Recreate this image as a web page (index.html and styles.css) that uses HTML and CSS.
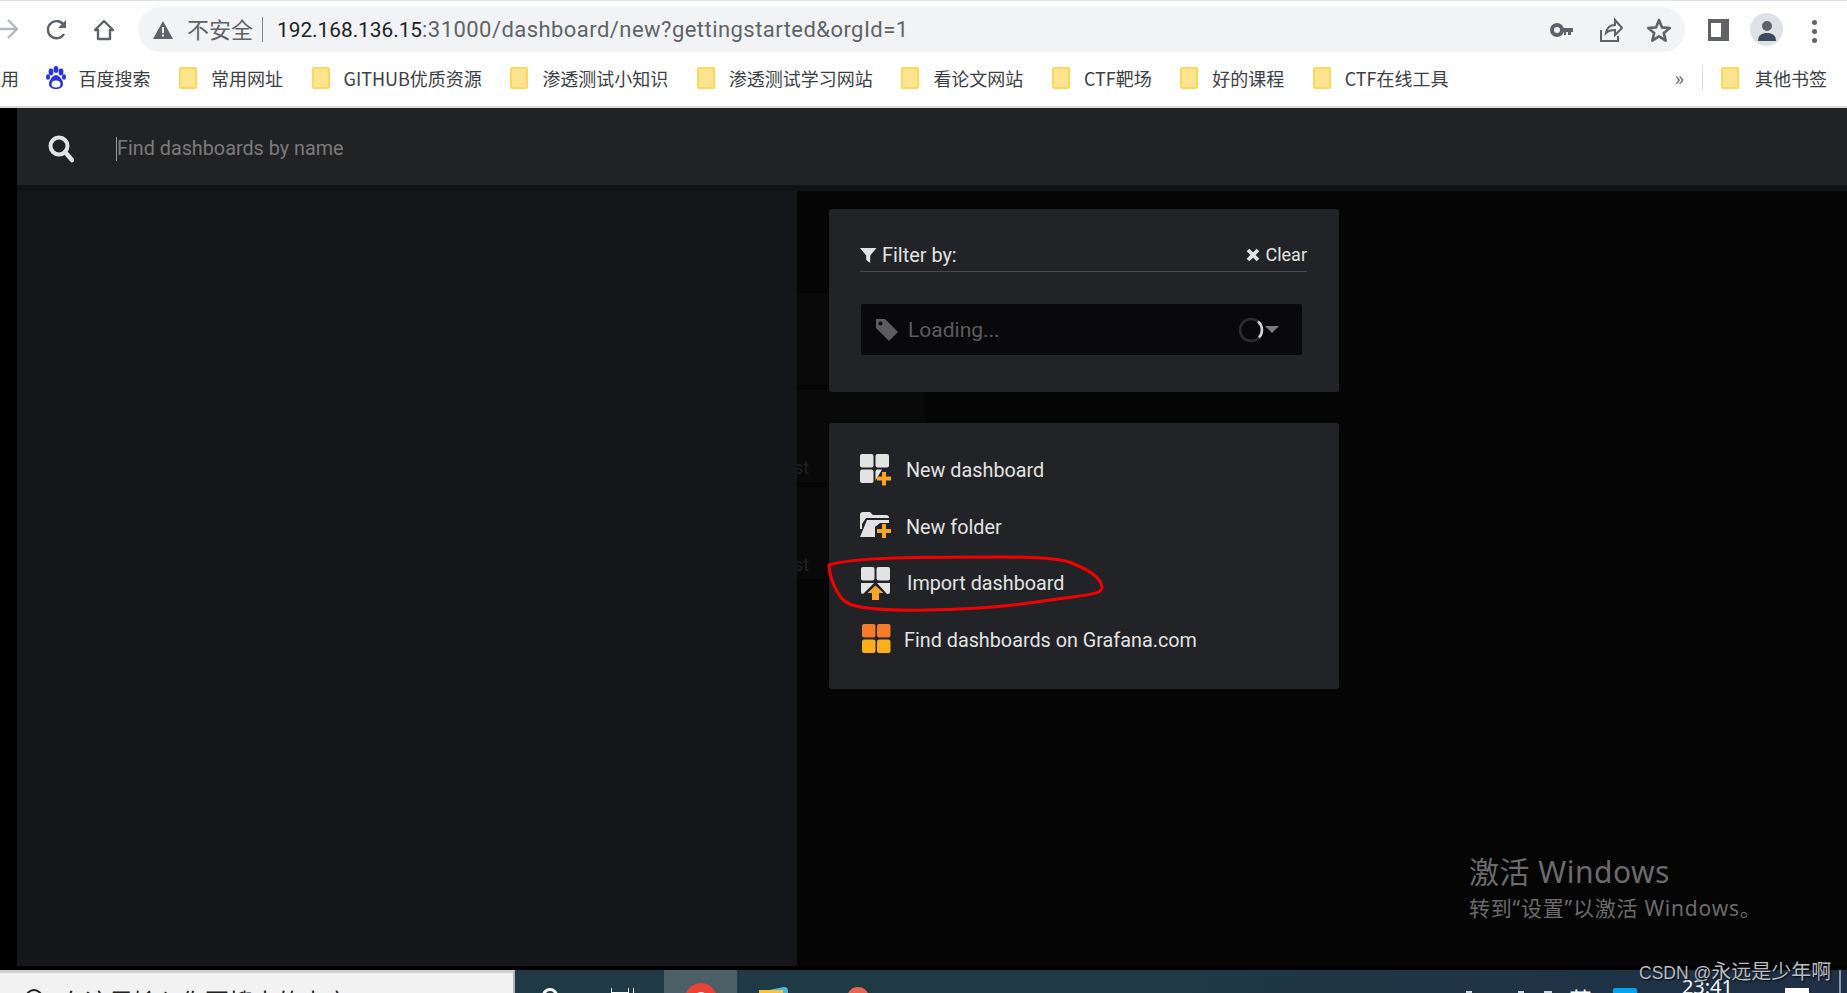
FILE: index.html
```html
<!DOCTYPE html>
<html>
<head>
  <meta charset="UTF-8">
  <title>Grafana</title>
  <link rel="stylesheet" href="styles.css">
</head>
<body>
  <div class="toolbar">
    <svg class="back" width="18" height="22" viewBox="0 0 18 22"><path d="M-4 11H16M8 2l9 9-9 9" fill="none" stroke="#b4b7bb" stroke-width="2.4"/></svg>
    <svg class="reload" width="22" height="24" viewBox="0 0 22 24"><path d="M18 16a8.6 8.6 0 1 1 0-8.6" fill="none" stroke="#5f6368" stroke-width="2.4"/><path d="M20 2v8h-8z" fill="#5f6368"/></svg>
    <svg class="home" width="22" height="24" viewBox="0 0 22 24"><path d="M11 3L2 12h3v9h12v-9h3z" fill="none" stroke="#5f6368" stroke-width="2.4" stroke-linejoin="round"/></svg>
    <div class="omnibox">
      <svg class="warn" width="20" height="18" viewBox="0 0 20 18"><path d="M10 0l10 18H0z" fill="#5f6368"/><path d="M9 6h2v6H9zM9 13.500h2v2H9z" fill="#f1f3f4"/></svg>
      <span class="insecure">不安全</span>
      <span class="omni-sep"></span>
      <span class="url"><b>192.168.136.15</b>:31000/dashboard/new?gettingstarted&amp;orgId=1</span>
      <svg class="omni-icon key" width="24" height="14" viewBox="0 0 24 14"><circle cx="7" cy="7" r="5" fill="none" stroke="#5f6368" stroke-width="4"/><path d="M11 5h12v4h-2v3h-3V9h-2v3h-2V9h-3z" fill="#5f6368"/></svg>
      <svg class="omni-icon share" width="24" height="26" viewBox="0 0 24 26"><path d="M2 13v11h17v-5M7 16c1-6 5-8 9-8V3l7 8-7 7v-5c-4 0-7 1-9 3z" fill="none" stroke="#5f6368" stroke-width="2"/></svg>
      <svg class="omni-icon star" width="24" height="24" viewBox="0 0 24 24"><path d="M12 2l3 7.400 7.800.6-6 5 1.900 7.600L12 18.400 5.300 22.600 7.200 15l-6-5 7.800-.6z" fill="none" stroke="#5f6368" stroke-width="2.600" stroke-linejoin="round"/></svg>
    </div>
    <div class="side-panel"></div>
    <div class="avatar">
      <svg width="20" height="22" viewBox="0 0 20 22"><circle cx="10" cy="6" r="5" fill="#5f6368"/><path d="M1 21c0-6 4-8 9-8s9 2 9 8z" fill="#3c4a5e"/></svg>
    </div>
    <div class="dots"><i></i><i></i><i></i></div>
  </div>

  <div class="bookmarks">
    <span class="apps-cut"><span>应用</span></span>
    <a class="mark mark-baidu">
      <svg class="paw" width="20" height="24" viewBox="0 0 20 24"><ellipse cx="5" cy="6" rx="2.400" ry="3.400" fill="#2932e1"/><ellipse cx="15" cy="6" rx="2.400" ry="3.400" fill="#2932e1"/><ellipse cx="10" cy="3.500" rx="2.400" ry="3.400" fill="#2932e1"/><ellipse cx="2" cy="11" rx="2" ry="2.800" fill="#2932e1"/><ellipse cx="18" cy="11" rx="2" ry="2.800" fill="#2932e1"/><path d="M10 9c-3 0-6 4-7 8-.5 4 3 6 7 6s7.500-2 7-6c-1-4-4-8-7-8z" fill="#2932e1"/><ellipse cx="10" cy="18" rx="4.500" ry="3.600" fill="#fff"/></svg>
      百度搜索
    </a>
    <a class="mark"><i class="folder"></i>常用网址</a>
    <a class="mark"><i class="folder"></i>GITHUB优质资源</a>
    <a class="mark"><i class="folder"></i>渗透测试小知识</a>
    <a class="mark"><i class="folder"></i>渗透测试学习网站</a>
    <a class="mark"><i class="folder"></i>看论文网站</a>
    <a class="mark"><i class="folder"></i>CTF靶场</a>
    <a class="mark"><i class="folder"></i>好的课程</a>
    <a class="mark"><i class="folder"></i>CTF在线工具</a>
    <span class="more">»</span>
    <span class="mark-sep"></span>
    <a class="mark mark-other"><i class="folder"></i>其他书签</a>
  </div>

  <div class="viewport">
    <div class="searchbar">
      <svg width="26" height="28" viewBox="0 0 26 28"><circle cx="11" cy="11" r="8.500" fill="none" stroke="#e3e3e3" stroke-width="4"/><path d="M17 17l7 8" stroke="#e3e3e3" stroke-width="4.500" stroke-linecap="round"/></svg>
      <span class="caret"></span>
      <span class="placeholder">Find dashboards by name</span>
    </div>
    <div class="search-edge"></div>
    <div class="results">
      <div class="left-pane"></div>
      <div class="right-pane">
        <div class="ghost-list">
          <div class="ghost-row"></div>
          <div class="ghost-row"><span>st</span></div>
          <div class="ghost-row"><span>st</span></div>
        </div>
        <div class="panel filter-panel">
          <div class="filter-head">
            <svg width="17" height="17" viewBox="0 0 17 17"><path d="M0 1h16.500l-6.300 7.500V16l-4-3V8.500z" fill="#e3e3e3"/></svg>
            <span class="filter-title">Filter by:</span>
            <svg class="clear-x" width="14" height="14" viewBox="0 0 14 14"><path d="M2 2l10 10M12 2L2 12" stroke="#e3e3e3" stroke-width="3.800"/></svg>
            <span class="clear">Clear</span>
          </div>
          <div class="tag-select">
            <svg width="24" height="24" viewBox="0 0 24 24"><path d="M1 1h9l13 13-9 9L1 10z" fill="#5c5c5e"/><circle cx="5.500" cy="5.500" r="2" fill="#09090b"/></svg>
            <span class="loading">Loading...</span>
            <svg class="spinner" width="26" height="26" viewBox="0 0 26 26"><circle cx="13" cy="13" r="11" fill="none" stroke="#2c2d30" stroke-width="2.500"/><path d="M20 4.500a11 11 0 0 1 1 16" fill="none" stroke="#d5d5d5" stroke-width="2.500"/></svg>
            <i class="select-caret"></i>
          </div>
        </div>

        <div class="panel action-panel">
          <a class="action">
            <svg width="33" height="33" viewBox="0 0 33 33">
              <rect x="0" y="0" width="13.500" height="13.500" rx="2" fill="#e3e3e3"/><rect x="15.500" y="0" width="13.500" height="13.500" rx="2" fill="#e3e3e3"/><rect x="0" y="15.500" width="13.500" height="13.500" rx="2" fill="#e3e3e3"/><path d="M15.500 17a2 2 0 0 1 2-1.500H22l-6.500 11z" fill="#e3e3e3"/>
              <path d="M22 18h4v4.500h5v4h-5v5h-4v-5h-5v-4h5z" fill="#f5a623"/>
            </svg>
            <span>New dashboard</span>
          </a>
          <a class="action">
            <svg width="33" height="33" viewBox="0 0 33 33">
              <path d="M0 4a3 3 0 0 1 3-3h7l3 3h13a3 3 0 0 1 3 3H6L2 13v5H0z" fill="#e3e3e3"/><path d="M7 9h22v3H20l-5 4v10H0z" fill="#e3e3e3"/>
              <path d="M22 13h4v5h5v4h-5v5h-4v-5h-5v-4h5z" fill="#f5a623"/>
            </svg>
            <span>New folder</span>
          </a>
          <a class="action action-import">
            <svg width="33" height="33" viewBox="0 0 33 33">
              <rect x="1" y="0" width="13.500" height="13.500" rx="2" fill="#e3e3e3"/><rect x="16.500" y="0" width="13.500" height="13.500" rx="2" fill="#e3e3e3"/>
              <path d="M1 16h9l4 0-11 11H3a2 2 0 0 1-2-2zM17 16h13v9a2 2 0 0 1-2 2h-1z" fill="#e3e3e3"/>
              <path d="M15.500 16L26 26.500h-6V33h-9v-6.500H5z" fill="#212327"/>
              <path d="M15.500 18.500L23.500 26H19v7h-7v-7H7.500z" fill="#f9a825"/>
            </svg>
            <span>Import dashboard</span>
          </a>
          <a class="action action-find">
            <svg width="33" height="33" viewBox="0 0 33 33">
              <rect x="2" y="0" width="13.500" height="13.500" rx="2" fill="#f47b27"/><rect x="17" y="0" width="13.500" height="13.500" rx="2" fill="#f47b27"/>
              <rect x="2" y="15.500" width="13.500" height="13.500" rx="2" fill="#fbb017"/><rect x="17" y="15.500" width="13.500" height="13.500" rx="2" fill="#fbb017"/>
            </svg>
            <span>Find dashboards on Grafana.com</span>
          </a>
        </div>
      </div>
    </div>
  </div>

  <div class="taskbar">
    <div class="task-search">
      <svg width="20" height="20" viewBox="0 0 20 20"><circle cx="10" cy="10" r="8" fill="none" stroke="#222" stroke-width="2"/></svg>
      <span>在这里输入你要搜索的内容</span>
    </div>
    <div class="task-cortana"></div>
    <div class="task-view"></div>
    <div class="task-view-line"></div>
    <div class="task-app active">
      <svg width="32" height="32" viewBox="0 0 32 32"><circle cx="16" cy="16" r="16" fill="#ea4335"/><path d="M16 16L32 16A16 16 0 0 1 16 32z" fill="#fbbc05"/><circle cx="16" cy="16" r="7" fill="#f3f3f3"/></svg>
    </div>
    <div class="task-app">
      <svg width="32" height="32" viewBox="0 0 32 32"><path d="M6 8l20-4q4 0 4 4v10H6z" fill="#4fb6dc"/><path d="M1 7h24v20H1z" fill="#f6c33c"/></svg>
    </div>
    <div class="task-app task-app-last">
      <svg width="22" height="22" viewBox="0 0 22 22"><circle cx="11" cy="11" r="11" fill="#e8654f"/></svg>
    </div>
    <div class="tray">
      <i class="tray-bit bit-a"></i>
      <i class="tray-bit bit-b"></i>
      <i class="tray-bit bit-c"></i>
      <span class="tray-mark">英</span>
      <i class="tray-blue"></i>
      <span class="clock">23:41</span>
      <i class="tray-note"></i>
      <i class="tray-line"></i>
    </div>
  </div>

  <!-- overlays on top of the screenshot -->
  <svg class="ring" width="278" height="58" viewBox="0 0 278 58"><path d="M2 10C25 3 70 2 175 2C205 2 228 3 242 7C258 13 274 22 275 32C275 38 268 39 245 42C215 46 175 54 100 55C75 55.500 45 55 29 51C20 49 14 44 11 38C6 30 2 18 2 10z" fill="none" stroke="#f40000" stroke-width="3"/></svg>
  <div class="activate">
    <div class="activate-big">激活 Windows</div>
    <div class="activate-small">转到“设置”以激活 Windows。</div>
  </div>
  <div class="watermark"><span>CSDN @</span>永远是少年啊</div>
</body>
</html>
```

FILE: styles.css
```css
html, body {
  margin: 0;
  height: 100%;
}

body {
  width: 1847px;
  height: 993px;
  overflow: hidden;
  position: relative;
  display: flex;
  flex-direction: column;
  background: #050506;
  font-family: "Noto Sans CJK SC", "Noto Sans", sans-serif;
}

/* browser toolbar */
.toolbar {
  height: 60px;
  box-sizing: border-box;
  padding-top: 7px;
  display: flex;
  align-items: flex-start;
  background: #fff;
  border-top: 1px solid #dee1e6;
}

.toolbar > svg {
  margin-top: 10px;
}

.reload {
  margin-left: 28px;
}

.home {
  margin-left: 25px;
}

.omnibox {
  width: 1547px;
  height: 45px;
  margin-left: 23px;
  margin-top: -1px;
  padding-left: 15px;
  box-sizing: border-box;
  display: flex;
  align-items: center;
  background: #f1f3f4;
  border-radius: 23px;
}

.insecure {
  margin-left: 14px;
  margin-top: -4px;
  font-size: 22px;
  color: #5f6368;
}

.omni-sep {
  width: 1px;
  height: 25px;
  margin-left: 9px;
  background: #80868b;
}

.url {
  margin-left: 14px;
  font-family: "Roboto", sans-serif;
  font-size: 22px;
  letter-spacing: 0.45px;
  color: #5f6368;
  white-space: nowrap;
}

.url b {
  font-size: 20.800px;
  font-weight: 400;
  letter-spacing: 0;
  color: #202124;
}

.omni-icon {
  flex-shrink: 0;
}

.key {
  margin-left: auto;
}

.share {
  margin-left: 25px;
}

.star {
  margin-left: 24px;
  margin-right: 14px;
}

.side-panel {
  margin-left: 23px;
  margin-top: 11px;
  border: 4px solid #5f6368;
  border-right-width: 8px;
  border-left-width: 3px;
  background: #fff;
  width: 10px;
  height: 14px;
}

.avatar {
  width: 33px;
  height: 33px;
  margin-left: 21px;
  margin-top: 5px;
  display: flex;
  align-items: flex-end;
  justify-content: center;
  border-radius: 50%;
  background: #dee1e6;
}

.avatar svg {
  margin-bottom: 4px;
}

.dots {
  margin-left: 29px;
  margin-top: 12px;
  display: flex;
  flex-direction: column;
  gap: 4px;
}

.dots i {
  width: 5px;
  height: 5px;
  border-radius: 50%;
  background: #5f6368;
}

/* bookmarks bar */
.bookmarks {
  height: 48px;
  box-sizing: border-box;
  padding: 0 20px 11px 0;
  display: flex;
  align-items: center;
  gap: 28.500px;
  background: #fff;
  border-bottom: 2px solid #dcdcdc;
  font-size: 18px;
  color: #3c4043;
  white-space: nowrap;
}

.apps-cut {
  width: 19px;
  overflow: hidden;
  direction: rtl;
}

.mark {
  display: flex;
  align-items: center;
  gap: 14px;
}

.mark-baidu {
  gap: 13px;
  margin-left: -2px;
}

.mark-other {
  gap: 16px;
}

.paw {
  flex-shrink: 0;
}

.folder {
  width: 18px;
  height: 22px;
  box-sizing: border-box;
  background: #fde58f;
  border: 2px solid #fbd75b;
  border-radius: 2px;
}

.more {
  margin-left: auto;
  font-size: 20px;
  color: #5f6368;
}

.mark-sep {
  width: 1px;
  height: 25px;
  margin-left: -11px;
  margin-right: -10px;
  background: #dadce0;
}

/* grafana page */
.viewport {
  flex: 1;
  min-height: 0;
  padding-left: 17px;
  display: flex;
  flex-direction: column;
  background: #000;
}

.searchbar {
  height: 77px;
  flex-shrink: 0;
  box-sizing: border-box;
  padding: 4px 0 0 31px;
  display: flex;
  align-items: center;
  background: #212224;
}

.caret {
  width: 1px;
  height: 24px;
  margin-left: 42px;
  background: #9a9a9a;
}

.placeholder {
  font-family: "Roboto", sans-serif;
  font-size: 19.800px;
  color: #7b7b7c;
}

.search-edge {
  height: 6px;
  flex-shrink: 0;
  background: #111214;
}

.results {
  flex: 1;
  min-height: 0;
  display: flex;
  padding-bottom: 4px;
}

.left-pane {
  width: 780px;
  background: #141619;
}

.right-pane {
  flex: 1;
  position: relative;
  padding: 18px 0 0 32px;
  background: #050506;
}

/* list behind the panels, barely visible through the dimmed page */
.ghost-list {
  position: absolute;
  left: 0;
  top: 102px;
  width: 128px;
  display: flex;
  flex-direction: column;
  gap: 5px;
}

.ghost-row {
  height: 92px;
  box-sizing: border-box;
  padding-bottom: 4px;
  overflow: hidden;
  display: flex;
  align-items: flex-end;
  background: #09090a;
  font-family: "Roboto", sans-serif;
  font-size: 18px;
  color: #202022;
}

.ghost-row span {
  margin-left: -3px;
}

.panel {
  width: 510px;
  box-sizing: border-box;
  position: relative;
  background: #212327;
  border-radius: 3px;
}

.filter-panel {
  height: 183px;
  padding: 30px 32px 0 31px;
}

.filter-head {
  height: 32px;
  display: flex;
  align-items: center;
  border-bottom: 1px solid #47484b;
  font-family: "Roboto", sans-serif;
  color: #e3e3e3;
}

.filter-title {
  margin-left: 5px;
  font-size: 19.900px;
}

.clear-x {
  margin-left: auto;
}

.clear {
  margin-left: 5px;
  margin-bottom: 2px;
  font-size: 18px;
}

.tag-select {
  width: 441px;
  height: 51px;
  margin-top: 32px;
  margin-left: 1px;
  padding-left: 14px;
  box-sizing: border-box;
  display: flex;
  align-items: center;
  background: #09090b;
  border-radius: 2px;
}

.loading {
  margin-left: 9px;
  font-family: "Roboto", sans-serif;
  font-size: 21px;
  color: #5c5c5e;
}

.spinner {
  margin-left: auto;
}

.select-caret {
  width: 0;
  height: 0;
  margin: 0 23px 0 1px;
  border-left: 7px solid transparent;
  border-right: 7px solid transparent;
  border-top: 7px solid #7b7b7c;
}

.action-panel {
  height: 266px;
  margin-top: 31px;
  padding: 19px 0 0 31px;
}

.action {
  height: 56.700px;
  display: flex;
  align-items: center;
  gap: 13px;
  font-family: "Roboto", sans-serif;
  font-size: 19.800px;
  color: #e3e3e3;
}

.action-import span {
  margin-left: 1px;
}

.action-find {
  gap: 11px;
}

/* windows taskbar, only its top edge is on screen */
.taskbar {
  height: 23px;
  flex-shrink: 0;
  display: flex;
  overflow: hidden;
  background: linear-gradient(90deg, #203a44, #1f3a45 60%, #1f2f46);
}

.task-search {
  width: 515px;
  flex-shrink: 0;
  box-sizing: border-box;
  padding: 15px 0 0 24px;
  display: flex;
  gap: 17px;
  background: #f2f2f2;
  border-top: 3px solid #cfcfcf;
  border-right: 2px solid #b5b5b5;
  font-size: 24px;
  line-height: 26px;
  color: #222;
  white-space: nowrap;
}

.task-search svg {
  flex-shrink: 0;
}

.task-cortana {
  width: 16px;
  height: 16px;
  flex-shrink: 0;
  margin: 18px 0 0 27px;
  box-sizing: border-box;
  border: 3px solid #fff;
  border-radius: 50%;
}

.task-view {
  width: 16px;
  height: 4px;
  flex-shrink: 0;
  margin: 18px 0 0 53px;
  box-sizing: content-box;
  border: 1px solid #fff;
  border-top: none;
}

.task-view-line {
  width: 1px;
  height: 5px;
  flex-shrink: 0;
  margin: 18px 0 0 4px;
  background: #fff;
}

.task-app {
  width: 73px;
  height: 23px;
  flex-shrink: 0;
  display: flex;
  justify-content: center;
}

.task-app svg {
  flex-shrink: 0;
  margin-top: 13px;
}

.task-app.active {
  margin-left: 30px;
  background: #4d5f66;
}

.task-app-last {
  margin-left: 11px;
}

.task-app-last svg {
  margin-top: 17px;
}

.tray {
  flex: 1;
  display: flex;
  align-items: flex-start;
  justify-content: flex-end;
  color: #fff;
}

.tray-bit {
  height: 2px;
  margin-top: 21px;
  background: #d5dbe0;
}

.bit-a {
  width: 6px;
  margin-right: 46px;
}

.bit-b {
  width: 6px;
  margin-right: 20px;
}

.bit-c {
  width: 8px;
  margin-right: 17px;
}

.tray-mark {
  margin-right: 21px;
  font-size: 23px;
  line-height: 30px;
  padding-top: 14px;
}

.tray-blue {
  width: 24px;
  height: 10px;
  margin: 18px 45px 0 0;
  background: #00a4ef;
  border-radius: 2px;
}

.clock {
  font-family: "Noto Sans", sans-serif;
  font-size: 20px;
  line-height: 24px;
  margin-top: 5px;
}

.tray-note {
  width: 24px;
  height: 10px;
  margin: 18px 30px 0 52px;
  background: #fff;
}

.tray-line {
  width: 2px;
  height: 23px;
  margin-right: 6px;
  background: #8d97a3;
}

/* overlays */
.ring {
  position: absolute;
  left: 827px;
  top: 555px;
}

.activate {
  position: absolute;
  left: 1469px;
  top: 851px;
  font-family: "Noto Sans", "Noto Sans CJK SC", sans-serif;
  color: #6b6b6b;
  white-space: nowrap;
}

.activate-big {
  font-size: 30px;
  line-height: 42px;
  letter-spacing: 0.5px;
}

.activate-small {
  font-size: 21px;
  line-height: 30px;
  letter-spacing: 0.8px;
}

.watermark {
  position: absolute;
  left: 1639px;
  top: 957px;
  font-family: "Noto Sans CJK SC", sans-serif;
  font-size: 20px;
  line-height: 28px;
  color: #b9bcc0;
  text-shadow: 1px 1px 2px #000;
  white-space: nowrap;
}

.watermark span {
  font-family: "Liberation Sans", sans-serif;
  font-size: 17.500px;
}
```
